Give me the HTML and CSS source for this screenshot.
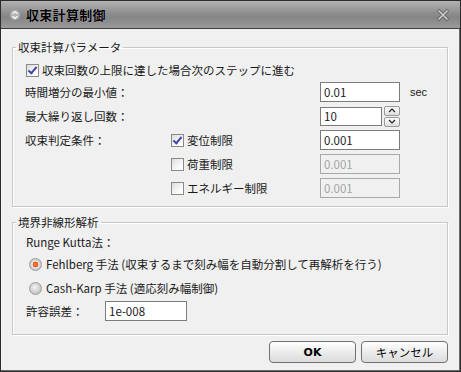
FILE: index.html
```html
<!DOCTYPE html>
<html>
<head>
	<title>収束計算制御</title>
	<link rel="stylesheet" href="styles.css">
</head>
<body>
	<div class="window">
		<div class="titlebar">
			<span class="title-icon">
				<svg width="10" height="12" viewBox="0 0 10 12"><circle cx="5" cy="6" r="5" fill="#b4b4b4"/><path d="M2.5 4.8 L5 2.6 L7.5 4.8 M2.5 7.2 L5 9.4 L7.5 7.2" stroke="#f4f4f4" stroke-width="1.4" fill="none"/></svg>
			</span>
			<span class="title-text">収束計算制御</span>
			<span class="close">
				<svg width="14" height="14" viewBox="0 0 14 14"><path d="M2 2 L12 12 M12 2 L2 12" stroke="#5e5e5e" stroke-width="3.2"/><path d="M2.5 2.5 L11.5 11.5 M11.5 2.5 L2.5 11.5" stroke="#d8d8d8" stroke-width="1.6"/></svg>
			</span>
		</div>

		<fieldset class="group">
			<legend>収束計算パラメータ</legend>
			<div class="params">
				<label class="row-check span-all"><span class="check on"></span>収束回数の上限に達した場合次のステップに進む</label>

				<div class="lbl">時間増分の最小値：</div>
				<div></div>
				<input class="field" type="text" value="0.01">
				<div class="unit">sec</div>

				<div class="lbl">最大繰り返し回数：</div>
				<div></div>
				<div class="spin">
					<input class="field short" type="text" value="10">
					<div class="spin-btns">
						<span class="spin-btn"><svg width="8" height="5" viewBox="0 0 8 5"><path d="M1 4 L4 1 L7 4" stroke="#222" stroke-width="1.2" fill="none"/></svg></span>
						<span class="spin-btn"><svg width="8" height="5" viewBox="0 0 8 5"><path d="M1 1 L4 4 L7 1" stroke="#222" stroke-width="1.2" fill="none"/></svg></span>
					</div>
				</div>
				<div></div>

				<div class="lbl">収束判定条件：</div>
				<label class="opt"><span class="check on"></span>変位制限</label>
				<input class="field" type="text" value="0.001">
				<div></div>

				<div></div>
				<label class="opt"><span class="check"></span>荷重制限</label>
				<input class="field" type="text" value="0.001" disabled>
				<div></div>

				<div></div>
				<label class="opt"><span class="check"></span>エネルギー制限</label>
				<input class="field" type="text" value="0.001" disabled>
				<div></div>
			</div>
		</fieldset>

		<fieldset class="group second">
			<legend>境界非線形解析</legend>
			<div class="solver">
				<div class="lbl row-rk">Runge Kutta法：</div>
				<label class="row-radio"><span class="radio on"></span>Fehlberg 手法 (収束するまで刻み幅を自動分割して再解析を行う)</label>
				<label class="row-radio"><span class="radio"></span>Cash-Karp 手法 (適応刻み幅制御)</label>
				<div class="row-tol">
					<span class="lbl tol-lbl">許容誤差：</span>
					<input class="field tol" type="text" value="1e-008">
				</div>
			</div>
		</fieldset>

		<div class="footer">
			<button class="btn ok">OK</button>
			<button class="btn">キャンセル</button>
		</div>
	</div>
</body>
</html>
```

FILE: styles.css
```css
body{
	margin: 0;
	font-family: 'Noto Sans CJK JP', 'Liberation Sans', sans-serif;
	font-size: 11.5px;
	color: #1a1a1a;
	background: #fff;
}

.window{
	width: 461px;
	height: 372px;
	box-sizing: border-box;
	border: 1px solid #2c2c2c;
	background: #f0f0f0;
	box-shadow: inset -1px -1px 0 #6a6a6a;
}

.titlebar{
	height: 27px;
	border-bottom: 1px solid #3e3e3e;
	background: linear-gradient(#b2b2b2, #8e8e8e 45%, #858585 60%, #9a9a9a);
	display: flex;
	align-items: center;
	padding: 0 10px 0 9px;
}
.title-icon{
	display: flex;
	width: 10px;
	margin-right: 6px;
}
.title-text{
	font-weight: bold;
	font-size: 13px;
	letter-spacing: 0.3px;
	color: #000;
	text-shadow: 0 0 1px rgba(255, 255, 255, 0.7);
	flex: 1;
}
.close{
	display: flex;
	opacity: 0.85;
}

.group{
	margin: 10px 0 0 11px;
	width: 436px;
	box-sizing: border-box;
	padding: 0;
	border: 1px solid #c8c8c8;
	box-shadow: inset 1px 1px 0 #fff, 1px 1px 0 #fff;
}
.group legend{
	margin-left: 3px;
	padding: 0 2px;
	line-height: 16px;
}
.group.second{
	margin-top: 7px;
}

.params{
	display: grid;
	grid-template-columns: 146px 149px 80px 1fr;
	grid-template-rows: 20px;
	grid-auto-rows: 24px;
	align-items: center;
	padding: 5px 0 6px 12px;
}
.span-all{
	grid-column: 1 / -1;
}
.params .row-check{
	height: 20px;
	margin-left: 1px;
}

.row-check, .opt, .row-radio{
	display: flex;
	align-items: center;
}

.check{
	width: 11px;
	height: 11px;
	border: 1px solid #8a8a8a;
	background: linear-gradient(135deg, #dcdcdc, #fff 80%);
	margin-right: 3px;
	position: relative;
	flex: none;
}
.check.on::after{
	content: "";
	position: absolute;
	left: 3px;
	top: 0px;
	width: 3px;
	height: 7px;
	border: solid #4646a8;
	border-width: 0 2px 2px 0;
	transform: rotate(40deg);
}

.field{
	width: 80px;
	height: 20px;
	box-sizing: border-box;
	border: 1px solid #7c7c7c;
	background: #fff;
	font-family: 'Noto Sans CJK JP', 'Liberation Sans', sans-serif;
	font-size: 11.5px;
	color: #1a1a1a;
	padding: 0 3px;
	margin: 0;
	outline: none;
}
.field:disabled{
	background: #f0f0f0;
	border-color: #a8a8a8;
	color: #a4a4a4;
}
.unit{
	padding-left: 10px;
	font-family: 'Liberation Sans', sans-serif;
	font-size: 11px;
}

.spin{
	display: flex;
	align-items: center;
	width: 80px;
}
.field.short{
	width: 62px;
	height: 19px;
}
.spin-btns{
	display: flex;
	flex-direction: column;
	gap: 1px;
	margin-left: 2px;
}
.spin-btn{
	width: 14px;
	height: 8px;
	border: 1px solid #9a9a9a;
	border-radius: 2px;
	background: linear-gradient(#fdfdfd, #dedede);
	display: flex;
	align-items: center;
	justify-content: center;
}

.solver{
	padding: 2px 0 12px 13px;
}
.row-rk{
	height: 20px;
	line-height: 20px;
}
.row-radio{
	height: 24px;
	padding-left: 3px;
}
.radio{
	width: 13px;
	height: 13px;
	border-radius: 50%;
	box-sizing: border-box;
	border: 1px solid #9c9c9c;
	background: radial-gradient(circle at 45% 40%, #f4f4f4, #c4c4c4 70%);
	margin-right: 4px;
	flex: none;
}
.radio.on{
	background: radial-gradient(circle at 50% 50%, #ff7a3c 0, #e85a1e 35%, #e8e8e8 40%, #bcbcbc 80%);
}
.row-tol{
	display: flex;
	align-items: center;
	height: 22px;
}
.tol-lbl{
	width: 79px;
}
.field.tol{
	width: 82px;
	height: 20px;
}

.footer{
	display: flex;
	justify-content: flex-end;
	gap: 5px;
	margin: 6px 12px 0 0;
}
.btn{
	width: 87px;
	height: 22px;
	border: 1px solid #707070;
	border-radius: 4px;
	background: linear-gradient(#ffffff, #ececec 50%, #dcdcdc);
	font-family: 'Noto Sans CJK JP', 'Liberation Sans', sans-serif;
	font-size: 11.5px;
	padding: 0;
	color: #000;
}
.btn.ok{
	font-weight: bold;
	font-family: 'DejaVu Sans', sans-serif;
	font-size: 11px;
}
```
